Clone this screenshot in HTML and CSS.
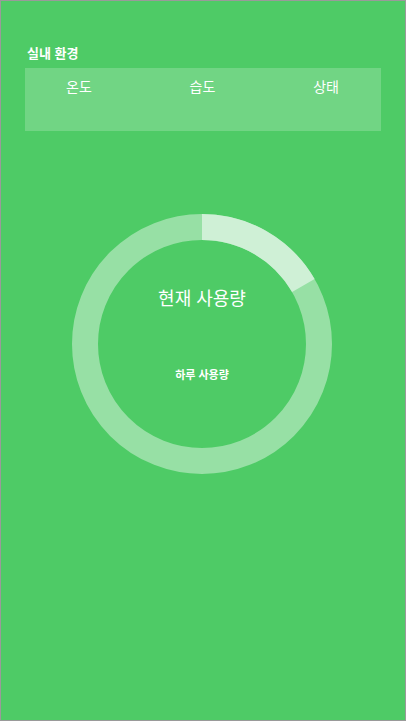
FILE: index.html
```html
<!DOCTYPE html>
<html lang="ko">
<head>
<meta charset="utf-8">
<link rel="stylesheet" href="styles.css">
</head>
<body>
<div class="frame">
  <div class="title">실내 환경</div>
  <div class="panel">
    <span class="label">온도</span>
    <span class="label">습도</span>
    <span class="label">상태</span>
  </div>
  <div class="gauge">
    <svg class="ring" width="262" height="262" viewBox="0 0 262 262">
      <circle cx="131" cy="131" r="117" fill="none" stroke="#97e0a5" stroke-width="26"/>
      <circle cx="131" cy="131" r="117" fill="none" stroke="#cff0d6" stroke-width="26"
        stroke-dasharray="122.5 1000" transform="rotate(-90 131 131)"/>
    </svg>
    <div class="center">
      <div class="now">현재 사용량</div>
      <div class="day">하루 사용량</div>
    </div>
  </div>
</div>
</body>
</html>
```
FILE: styles.css
```css
html, body { margin: 0; padding: 0; }
body {
  font-family: "Noto Sans CJK KR", "Noto Sans", sans-serif;
  color: #fff;
}
.frame {
  box-sizing: border-box;
  width: 406px;
  height: 721px;
  background: #4ecb66;
  border: 1px solid #9a9a9a;
  padding: 0 24px;
  display: flex;
  flex-direction: column;
}
.title {
  margin-top: 42px;
  font-size: 13px;
  font-weight: 700;
  line-height: 20px;
  padding-left: 2px;
}
.panel {
  margin-top: 5px;
  height: 63px;
  background: rgba(255,255,255,0.2);
  display: flex;
  justify-content: space-between;
  align-items: flex-start;
  padding: 8px 42px 0 41px;
  box-sizing: border-box;
}
.label {
  font-size: 14px;
  line-height: 20px;
}
.gauge {
  margin-top: 82px;
  align-self: center;
  display: grid;
  margin-left: -2px;
}
.ring, .center { grid-area: 1 / 1; }
.ring { display: block; }
.center {
  display: flex;
  flex-direction: column;
  align-items: center;
  padding-top: 72px;
}
.now {
  font-size: 18px;
  line-height: 24px;
}
.day {
  margin-top: 57px;
  font-size: 11px;
  font-weight: 700;
  line-height: 16px;
}
```
